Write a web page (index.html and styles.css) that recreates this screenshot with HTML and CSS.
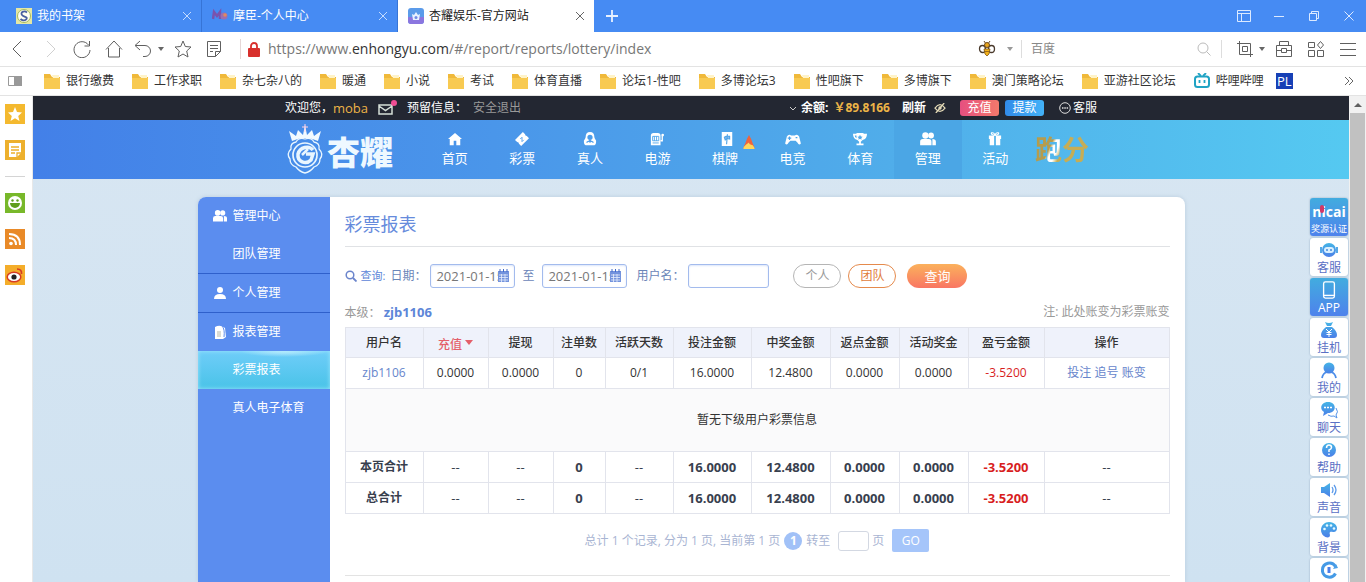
FILE: index.html
```html
<!DOCTYPE html>
<html lang="zh-CN">
<head>
<meta charset="utf-8">
<title>杏耀娱乐-官方网站</title>
<link rel="stylesheet" href="styles.css">
</head>
<body>
<svg class="defs" aria-hidden="true">
  <defs>
    <linearGradient id="blue" x1="0" y1="0" x2="0" y2="1"><stop offset="0" stop-color="#45b5e6"/><stop offset="1" stop-color="#4b7fe8"/></linearGradient>
    <symbol id="folder" viewBox="0 0 16 16"><path d="M0 1h6l2 3h8v12H0z" fill="#f0b93a"/><path d="M8 2h7v3H9z" fill="#fff3c8"/><path d="M0 5h16v11H0z" fill="#f8ca52"/></symbol>
    <symbol id="people" viewBox="0 0 18 16"><g fill="currentColor"><circle cx="6" cy="4" r="3.6"/><circle cx="12.5" cy="4" r="3.3"/><path d="M0 15v-4q0-3 3-3h7q3 0 3 3v4zM14 15h4v-4q0-3-4-3z"/></g></symbol>
    <symbol id="calendar" viewBox="0 0 13 13"><path d="M1 2h11v11H1z" fill="#7393dd"/><path d="M3 0v3M6.500 0v3M10 0v3" stroke="#4169c9"/><path d="M2 6h9M2 8.500h9M2 11h9M4.500 5v8M8 5v8" stroke="#e7edfb" stroke-width=".8"/></symbol>
  </defs>
</svg>

<header class="browser">
  <div class="tabs">
    <div class="tab">
      <svg class="i16" viewBox="0 0 16 16"><path d="M0 0h16v16H0z" fill="#e5e7a4"/><circle cx="8" cy="8" r="6.500" fill="#fffef0" stroke="#a3b860"/><path d="M11 4.500C8 2 4 4.500 6 7s6 1.500 4.500 4-5 1-6 0" fill="none" stroke="#4a60a0" stroke-width="1.800"/></svg>
      <span class="tab-name">我的书架</span><button class="tab-x" aria-label="关闭"><svg class="i10" viewBox="0 0 10 10"><path d="M1 1l8 8M9 1L1 9"/></svg></button>
    </div>
    <div class="tab">
      <svg class="i16" viewBox="0 0 16 16"><path d="M1 11l1-7 3 4 3-4v7" fill="none" stroke="#7a53ad" stroke-width="2.500"/><circle cx="12" cy="8" r="3.500" fill="#9d6fae"/><circle cx="13" cy="7" r="1.800" fill="#e0895f"/></svg>
      <span class="tab-name">摩臣-个人中心</span><button class="tab-x" aria-label="关闭"><svg class="i10" viewBox="0 0 10 10"><path d="M1 1l8 8M9 1L1 9"/></svg></button>
    </div>
    <div class="tab tab-on">
      <svg class="i16" viewBox="0 0 16 16"><rect width="16" height="16" rx="3" fill="#5b9bea"/><path d="M0 9h16v4q0 3-3 3H3q-3 0-3-3z" fill="#8b76df"/><path d="M4 6l2 1 2-3 2 3 2-1-1 6H5z" fill="#e9f1ff"/><circle cx="8" cy="9.500" r="1.500" fill="#6f8be5"/></svg>
      <span class="tab-name">杏耀娱乐-官方网站</span><button class="tab-x" aria-label="关闭"><svg class="i10" viewBox="0 0 10 10"><path d="M1 1l8 8M9 1L1 9"/></svg></button>
    </div>
    <button class="tab-new" aria-label="新标签"><svg class="i12" viewBox="0 0 12 12"><path d="M6 0v12M0 6h12" stroke-width="1.800"/></svg></button>
    <div class="window-buttons">
      <button aria-label="布局"><svg class="i14" viewBox="0 0 14 14"><path d="M.5 1.500h13v11H.5zM.5 4.500h13M4.500 4.500v8"/></svg></button>
      <button aria-label="最小化"><svg class="i14" viewBox="0 0 14 14"><path d="M2 7.500h10"/></svg></button>
      <button aria-label="还原"><svg class="i14" viewBox="0 0 14 14"><path d="M2.500 4.500h7v7h-7zM4.500 4.500v-2h7v7h-2"/></svg></button>
      <button aria-label="关闭窗口"><svg class="i14" viewBox="0 0 14 14"><path d="M2.500 2.500l9 9M11.500 2.500l-9 9"/></svg></button>
    </div>
  </div>

  <div class="toolbar">
    <div class="tools">
      <button aria-label="后退"><svg class="i18" viewBox="0 0 18 18"><path d="M12 1L4 9l8 8"/></svg></button>
      <button class="faint" aria-label="前进"><svg class="i18" viewBox="0 0 18 18"><path d="M6 1l8 8-8 8"/></svg></button>
      <button aria-label="刷新"><svg class="i18" viewBox="0 0 18 18"><path d="M15.500 5A8 8 0 1 0 17 10M16.500 1v5h-5"/></svg></button>
      <button aria-label="主页"><svg class="i18" viewBox="0 0 18 18"><path d="M1 9.500L9 1l8 8.500M3.500 8v9h11V8"/></svg></button>
    </div>
    <button class="undo" aria-label="撤销"><svg class="i18" viewBox="0 0 18 18"><path d="M6 1L1 5.500 6 10M1.500 5.500H11a5.500 5.500 0 0 1 0 11H9"/></svg><span class="caret"></span></button>
    <button aria-label="收藏"><svg class="i18" viewBox="0 0 18 18"><path d="M9 1l2.300 5.500 5.700.5-4.300 4 1.300 6L9 14l-5 3 1.300-6L1 7l5.700-.5z"/></svg></button>
    <button class="reader" aria-label="笔记"><svg class="i16" viewBox="0 0 16 16"><path d="M1.500.5h13v10l-5 5h-8zM14.500 10.500h-5v5M4 4.500h8M4 7.500h8M4 10.500h3"/></svg></button>
    <div class="address">
      <svg class="lock" viewBox="0 0 12 15"><path d="M3 7V4a3 3 0 0 1 6 0v3" fill="none" stroke="#d8302c" stroke-width="1.800"/><rect y="6" width="12" height="9" rx="1" fill="#d8302c"/></svg>
      <span>https://www.<b>enhongyu.com</b>/#/report/reports/lottery/index</span>
    </div>
    <svg class="i18" viewBox="0 0 18 18"><path d="M6 1l2 3M12 1l-2 3" stroke="#6d4b20"/><ellipse cx="4.500" cy="9" rx="3" ry="3.500" fill="#fff" stroke="#4a3a2c" stroke-width="1.300"/><ellipse cx="13.500" cy="9" rx="3" ry="3.500" fill="#fff" stroke="#4a3a2c" stroke-width="1.300"/><circle cx="9" cy="5" r="2.500" fill="#e8a51c" stroke="#6d4b20"/><path d="M6 9h6l-1 5-2 2-2-2z" fill="#f3b21b" stroke="#7d5518" stroke-width=".8"/><path d="M7 11.500h4" stroke="#a06d18"/></svg>
    <span class="caret caret-bee"></span>
    <div class="search"><input type="text" placeholder="百度" aria-label="百度"><svg class="i14" viewBox="0 0 14 14"><circle cx="6" cy="6" r="5"/><path d="M9.500 9.500L13.500 13.500"/></svg></div>
    <div class="tools-right">
      <button class="undo" aria-label="截图"><svg class="i16" viewBox="0 0 16 16"><path d="M0 2.500h13.500V16M2.500 0v13.500H16M5.500 5.500h5v5h-5z"/></svg><span class="caret"></span></button>
      <button aria-label="工具箱"><svg class="i16" viewBox="0 0 16 16"><path d="M.5 4.500h15v11H.5zM3.500 4.500v-4h9v4M.5 9.500h5M10.500 9.500h5M5.500 7.500h5v4h-5z"/></svg></button>
      <button aria-label="应用"><svg class="i16" viewBox="0 0 16 16"><path d="M.5 1.500h6v5h-6zM.5 9.500h6v6h-6zM9.500 9.500h6v6h-6zM12.500.5l3 3.500-3 3.500-3-3.500z"/></svg></button>
      <button aria-label="菜单"><svg class="i16" viewBox="0 0 16 16"><path d="M0 2.500h16M0 8.500h16M0 14.500h16"/></svg></button>
    </div>
  </div>

  <nav class="bookmarks">
    <svg class="panel-icon" viewBox="0 0 14 10"><path d="M.5.500h13v9H.5z" fill="#fff" stroke="#999"/><path d="M6 0h8v10H6z" fill="#999"/></svg>
    <a href="#"><svg class="i16"><use href="#folder"/></svg>银行缴费</a>
    <a href="#"><svg class="i16"><use href="#folder"/></svg>工作求职</a>
    <a href="#"><svg class="i16"><use href="#folder"/></svg>杂七杂八的</a>
    <a href="#"><svg class="i16"><use href="#folder"/></svg>暖通</a>
    <a href="#"><svg class="i16"><use href="#folder"/></svg>小说</a>
    <a href="#"><svg class="i16"><use href="#folder"/></svg>考试</a>
    <a href="#"><svg class="i16"><use href="#folder"/></svg>体育直播</a>
    <a href="#"><svg class="i16"><use href="#folder"/></svg>论坛1-性吧</a>
    <a href="#"><svg class="i16"><use href="#folder"/></svg>多博论坛3</a>
    <a href="#"><svg class="i16"><use href="#folder"/></svg>性吧旗下</a>
    <a href="#"><svg class="i16"><use href="#folder"/></svg>多博旗下</a>
    <a href="#"><svg class="i16"><use href="#folder"/></svg>澳门策略论坛</a>
    <a href="#"><svg class="i16"><use href="#folder"/></svg>亚游社区论坛</a>
    <a href="#"><svg class="i16" viewBox="0 0 16 16"><path d="M4 0l3 3M12 0L9 3" stroke="#20a3c4" stroke-width="1.800"/><rect x="1" y="3.500" width="14" height="10.500" rx="2.500" fill="#fff" stroke="#20a3c4" stroke-width="2"/><path d="M5.500 7v3M10.500 7v3" stroke="#20a3c4" stroke-width="1.800"/></svg>哔哩哔哩</a>
    <a class="pl" href="#">PL</a>
    <button class="more" aria-label="更多"><svg class="i10" viewBox="0 0 10 10"><path d="M1 1l4 4-4 4M5 1l4 4-4 4"/></svg></button>
  </nav>
</header>

<div class="pane">
  <aside class="strip">
    <svg class="i20" viewBox="0 0 20 20"><path d="M0 0h20v20H0z" fill="#f4b92f"/><path d="M10 3l2 5 5 .5-3.800 3.500 1.300 5-4.500-2.800L5.500 17l1.300-5L3 8.500 8 8z" fill="#fff"/></svg>
    <svg class="i20" viewBox="0 0 20 20"><path d="M0 0h20v20H0z" fill="#edb02d"/><path d="M4 3h12v10l-4 4H4z" fill="#fff"/><path d="M6 7h8M6 10h8M6 13h4M12 17v-4h4" fill="none" stroke="#edb02d" stroke-width="1.300"/></svg>
    <hr>
    <svg class="i20" viewBox="0 0 20 20"><path d="M0 0h20v20H0z" fill="#78b82a"/><circle cx="10" cy="10" r="7" fill="#fff"/><circle cx="7.500" cy="7.500" r="1.200" fill="#5f9e1c"/><circle cx="12.500" cy="7.500" r="1.200" fill="#5f9e1c"/><path d="M5 10h10a5 5 0 0 1-10 0" fill="#5f9e1c"/></svg>
    <svg class="i20" viewBox="0 0 20 20"><path d="M0 0h20v20H0z" fill="#e98a28"/><circle cx="6" cy="14.500" r="1.800" fill="#fff"/><path d="M4 9q7 0 7 7M4 5q11 0 11 11" fill="none" stroke="#fff" stroke-width="2"/></svg>
    <svg class="i20" viewBox="0 0 20 20"><path d="M0 0h20v20H0z" fill="#f4ad2a"/><ellipse cx="9" cy="12" rx="6.800" ry="4.800" fill="#fff" stroke="#d63b24" stroke-width="1.500"/><circle cx="9" cy="12" r="2.600" fill="#222"/><path d="M12 4q5 0 4.500 5" fill="none" stroke="#d63b24" stroke-width="1.700"/></svg>
  </aside>

  <main class="site">
    <div class="topbar">
      <div class="wrap">
        <span>欢迎您，</span><span class="gold">moba</span>
        <a class="mail" href="#" aria-label="消息"><svg class="mail-icon" viewBox="0 0 20 16"><path d="M1 5h13v9H1zM1 6l6.500 4.500L14 6" fill="none" stroke="#d5dfd8" stroke-width="1.500"/><circle cx="16" cy="3" r="3" fill="#f04d94"/></svg></a>
        <span>预留信息：</span><a class="quit" href="#">安全退出</a>
        <div class="account">
          <svg class="chev" viewBox="0 0 8 8"><path d="M1 3l3 3 3-3"/></svg>
          <b>余额:</b><b class="gold money">￥89.8166</b><b>刷新</b>
          <svg class="eye" viewBox="0 0 14 12"><path d="M1 6q6-8 12 0-6 8-12 0z" fill="none" stroke="#e5dbb8" stroke-width="1.500"/><circle cx="7" cy="6" r="2" fill="#e5dbb8"/><path d="M2 12L12 0" stroke="#e5dbb8" stroke-width="1.500"/></svg>
          <button class="pill pill-pink">充值</button><button class="pill pill-blue">提款</button>
          <a class="service" href="#"><svg class="i12" viewBox="0 0 12 12"><circle cx="6" cy="6" r="5.300"/><path d="M3 6h1.500M5.300 6h1.500M7.600 6h1.500" stroke-width="1.500"/></svg>客服</a>
        </div>
      </div>
    </div>

    <div class="navbar">
      <div class="wrap">
        <a class="logo" href="#">
          <svg class="emblem" viewBox="0 0 40 52"><g fill="none" stroke="#e9f6ff"><path d="M20 15q6-2 9 3 6 1 5 7 5 5 1 10 0 6-6 8-4 5-9 6-5-1-9-6-6-2-6-8-4-5 1-10-1-6 5-7 3-5 9-3z" stroke-width="1.300"/><circle cx="20" cy="31" r="12" stroke-width="1.700"/><path d="M28 26C24 21 15 23 13 30c-1 8 8 11 13 6l2-6h-7" stroke-width="3.500"/><path d="M17 31l6-6" stroke-width="2.500"/></g><path d="M7 17L4 7l7 5 2-6 5 5 2-10 2 10 5-5 2 6 7-5-3 10q-13-6-26 0z" fill="#f1faff"/><path d="M20 0v8M17 3h6" stroke="#ffd0e3"/></svg>
          <span>杏耀</span>
        </a>
        <nav class="menu">
          <a href="#"><svg class="ic" viewBox="0 0 16 16"><path d="M8 1l8 7h-2v7H9.500v-5h-3v5H2V8H0z" fill="#fff"/></svg>首页</a>
          <a href="#"><svg class="ic" viewBox="0 0 16 16"><path d="M9 0l2.500 2.500q0 2 2 2L16 7l-9 9-2.500-2.500q0-2-2-2L0 9z" fill="#fff"/><path d="M6 8l2-2v5l2-2" fill="none" stroke="#4c9deb"/></svg>彩票</a>
          <a href="#"><svg class="ic" viewBox="0 0 16 16"><path d="M8 0q5 0 5 6 0 1 2 4 0 5-2 5H3q-2 0-2-5 2-3 2-4 0-6 5-6z" fill="#fff"/><path d="M8 3q3 0 3 3t-3 3-3-3 3-3zM7 9h2v3H7z" fill="#4c9deb"/><path d="M4 12q4-3 8 0" fill="none" stroke="#4c9deb" stroke-width="1.300"/></svg>真人</a>
          <a href="#"><svg class="ic" viewBox="0 0 16 16"><path d="M1 15V4q0-3 3-3h5q3 0 3 3v11z" fill="#fff"/><path d="M3 5h7v5H3zM5 5v5M7.500 5v5M3 12.500h7" fill="none" stroke="#4ca4eb"/><path d="M12 10h2V4" fill="none" stroke="#fff" stroke-width="1.500"/><circle cx="14.500" cy="3.500" r="1.500" fill="#fff"/></svg>电游</a>
          <a href="#" class="hot"><svg class="ic" viewBox="0 0 16 16"><path d="M2 0h12v16H2z" fill="#fff"/><path d="M5 6q3-2 6-1v3q-3-1-5 1zM8.500 2.500L7.500 14" fill="#8ab9ec" stroke="#51a6e8" stroke-width="1.300"/></svg>棋牌<svg class="flame" viewBox="0 0 12 16"><path d="M6 0q3 5 4 9 2 4 2 6H0q0-3 2-6 1-4 4-9z" fill="#f0643c"/><path d="M6 8q0 2 4 3 2 2 2 4H0q0-3 3-5z" fill="#ffd75c"/></svg></a>
          <a href="#"><svg class="ic" viewBox="0 0 18 16"><path d="M2 5q2-3 5-1h4q3-2 5 1l2 8q-2 3-4-1l-2-2H6l-2 2q-2 4-4 1z" fill="#fff"/><path d="M3 7h4M5 5v4M12 6.500h2" stroke="#4ca4eb" stroke-width="1.300"/></svg>电竞</a>
          <a href="#"><svg class="ic" viewBox="0 0 16 16"><path d="M4 1h8v1h4q0 6-5 7l-2 2v2h3v2H4v-2h3v-2L5 9Q0 8 0 2h4zM2 4q0 2 2 3V4zM14 4q0 2-2 3V4z" fill="#fff"/><path d="M8 3l1 2 2 .3-1.500 1.500.3 2L8 7.700 6.200 8.800l.3-2L5 5.300 7 5z" fill="#51a9ea"/></svg>体育</a>
          <a href="#" class="on"><svg class="ic"><use href="#people"/></svg>管理</a>
          <a href="#"><svg class="ic" viewBox="0 0 16 16"><path d="M1 4h6v4H1zM9 4h6v4H9zM2 8h5v7H2zM9 8h5v7H9z" fill="#fff"/><path d="M8 4Q3 3 4 1q3-1 4 3 1-4 4-3 1 2-4 3" fill="none" stroke="#fff" stroke-width="1.300"/></svg>活动</a>
        </nav>
        <a class="run" href="#">跑分</a>
      </div>
    </div>

    <div class="card">
      <nav class="side">
        <div class="group"><a href="#"><svg class="i14"><use href="#people"/></svg>管理中心</a><a href="#" class="sub">团队管理</a></div>
        <div class="group"><a href="#"><svg class="i14" viewBox="0 0 14 14"><circle cx="7" cy="4" r="3" fill="#fff"/><path d="M1 13q0-5 6-5t6 5z" fill="#fff"/></svg>个人管理</a></div>
        <div class="group"><a href="#"><svg class="i14" viewBox="0 0 14 14"><path d="M2 2q5-3 10 1l1 9-3 2H2z" fill="#fff"/><path d="M9 1q3 3 2 11" fill="none" stroke="#5b8def"/><path d="M4 7h4M4 9h4M4 11h4" stroke="#b8b8a8"/></svg>报表管理</a><a href="#" class="sub active">彩票报表</a><a href="#" class="sub">真人电子体育</a></div>
      </nav>

      <section class="content">
        <h1>彩票报表</h1>
        <form class="filter" onsubmit="return false">
          <svg class="i12" viewBox="0 0 12 12"><circle cx="5" cy="5" r="3.800" stroke-width="1.500"/><path d="M8 8l3.500 3.500" stroke-width="1.800"/></svg>
          <span class="query-label">查询:</span>
          <label for="from">日期：</label>
          <span class="date"><input id="from" type="text" value="2021-01-15"><svg><use href="#calendar"/></svg></span>
          <label class="to" for="to">至</label>
          <span class="date"><input id="to" type="text" value="2021-01-15"><svg><use href="#calendar"/></svg></span>
          <label class="user-label" for="user">用户名：</label>
          <input id="user" class="user" type="text">
          <button class="round">个人</button><button class="round orange">团队</button><button class="submit">查询</button>
        </form>
        <div class="level"><span>本级： <a href="#">zjb1106</a></span><span>注: 此处账变为彩票账变</span></div>
        <table>
          <colgroup><col class="c78"><col class="c65"><col class="c65"><col class="c52"><col class="c68"><col class="c78"><col class="c79"><col class="c69"><col class="c69"><col class="c76"><col class="c125"></colgroup>
          <thead><tr><th>用户名</th><th class="sort">充值<span class="sort-caret"></span></th><th>提现</th><th>注单数</th><th>活跃天数</th><th>投注金额</th><th>中奖金额</th><th>返点金额</th><th>活动奖金</th><th>盈亏金额</th><th>操作</th></tr></thead>
          <tbody>
            <tr><td><a href="#">zjb1106</a></td><td>0.0000</td><td>0.0000</td><td>0</td><td>0/1</td><td>16.0000</td><td>12.4800</td><td>0.0000</td><td>0.0000</td><td class="neg">-3.5200</td><td><a href="#">投注</a> <a href="#">追号</a> <a href="#">账变</a></td></tr>
            <tr class="empty"><td colspan="11">暂无下级用户彩票信息</td></tr>
          </tbody>
          <tfoot>
            <tr><td>本页合计</td><td class="none">--</td><td class="none">--</td><td>0</td><td class="none">--</td><td>16.0000</td><td>12.4800</td><td>0.0000</td><td>0.0000</td><td class="neg">-3.5200</td><td class="none">--</td></tr>
            <tr><td>总合计</td><td class="none">--</td><td class="none">--</td><td>0</td><td class="none">--</td><td>16.0000</td><td>12.4800</td><td>0.0000</td><td>0.0000</td><td class="neg">-3.5200</td><td class="none">--</td></tr>
          </tfoot>
        </table>
        <div class="pager"><span>总计 1 个记录, 分为 1 页, 当前第 1 页</span><a class="num" href="#">1</a><label for="jump">转至</label><input id="jump" type="text"><span class="unit">页</span><button>GO</button></div>
      </section>
    </div>

    <nav class="dock">
      <a class="solid nicai" href="#"><strong>nicai</strong><em></em>奖源认证</a>
      <a href="#"><svg class="i18" viewBox="0 0 18 18"><circle cx="9" cy="9" r="7" fill="url(#blue)"/><path d="M1 6v6M17 6v6" stroke="#55a8e6" stroke-width="2"/><rect x="4" y="6" width="10" height="6" rx="3" fill="#d8efff"/><circle cx="7" cy="9" r="1" fill="#4388dd"/><circle cx="11" cy="9" r="1" fill="#4388dd"/></svg>客服</a>
      <a class="solid" href="#"><svg class="phone" viewBox="0 0 14 20"><rect x="1" y="1" width="12" height="18" rx="2" fill="none" stroke="#fff" stroke-width="1.500"/><path d="M1 16h12" stroke="#fff" stroke-width="1.500"/></svg>APP</a>
      <a href="#"><svg class="i18" viewBox="0 0 18 18"><path d="M5 1q4 2 8 0l-2 4H7zM6 6h6q5 4 5 8 0 3-3 3H4q-3 0-3-3 0-4 5-8z" fill="url(#blue)"/><path d="M6 8l3 3 3-3M9 11v5M6.500 11.500h5M6.500 13.500h5" stroke="#fff" fill="none"/></svg>挂机</a>
      <a href="#"><svg class="i18" viewBox="0 0 18 18"><circle cx="9" cy="7" r="5.500" fill="url(#blue)"/><path d="M2 17q1-5 5-6M16 17q-1-5-5-6" fill="none" stroke="#4b8ce8" stroke-width="1.800"/></svg>我的</a>
      <a href="#"><svg class="i18" viewBox="0 0 18 18"><path d="M8 1c9 0 9 11 0 11l-5 3 1-4C-1 8 1 1 8 1z" fill="url(#blue)"/><path d="M16 7q3 4 0 7l1 3-3-2q-3 1-6-1" fill="none" stroke="#5594e8"/><path d="M4 6.500h2M7 6.500h2M10 6.500h2" stroke="#fff" stroke-width="1.500"/></svg>聊天</a>
      <a href="#"><svg class="i18" viewBox="0 0 18 18"><circle cx="9" cy="9" r="7" fill="url(#blue)"/><path d="M6.500 7q0-3 2.500-3t2.500 2.500Q11.500 8 9 9v2M9 12.500V14" fill="none" stroke="#fff" stroke-width="1.500"/></svg>帮助</a>
      <a href="#"><svg class="i18" viewBox="0 0 18 18"><path d="M1 6h3l6-4v14l-6-4H1z" fill="url(#blue)"/><path d="M12 6q2 3 0 6M14 4q4 5 0 10" fill="none" stroke="#5b9aea" stroke-width="1.300"/></svg>声音</a>
      <a href="#"><svg class="i18" viewBox="0 0 18 18"><path d="M9 1C20 2 18 12 13 11c-3-1-4 0-3 3 0 5-9 2-9-5 0-5 4-8 8-8z" fill="url(#blue)"/><g fill="#e6fbff"><circle cx="4.500" cy="8" r="1.300"/><circle cx="7" cy="4.500" r="1.300"/><circle cx="11" cy="4.500" r="1.300"/><circle cx="14" cy="7.500" r="1.300"/></g></svg>背景</a>
      <a href="#" aria-label="转换"><svg class="i18" viewBox="0 0 18 18"><path d="M15.500 5.500a7 7 0 0 0-13 3v2a7 7 0 0 0 13 2" fill="none" stroke="#459ae6" stroke-width="3"/><path d="M9 6v6" stroke="#4b7fe8" stroke-width="3"/><path d="M13 8l5-1-2-4z" fill="#4b9fe8"/></svg></a>
    </nav>
  </main>
  <div class="scroll" aria-hidden="true"><svg class="i10" viewBox="0 0 10 10"><path d="M1 7l4-4 4 4z" fill="#606060"/></svg><span></span></div>
</div>
</body>
</html>
```
FILE: styles.css
```css
* { box-sizing: border-box; }
body { margin: 0; height: 100vh; display: flex; flex-direction: column; overflow: hidden; font: 12px/18px "Open Sans", "Noto Sans CJK SC", sans-serif; color: #333; background: #fff; }
a { color: inherit; text-decoration: none; }
button, input { font: inherit; color: inherit; padding: 0; margin: 0; border: 0; background: none; outline: 0; }
svg { display: block; flex: none; fill: none; stroke: none; }
.defs { position: absolute; width: 0; height: 0; }
.i10 { width: 10px; height: 10px; }
.i12 { width: 12px; height: 12px; }
.i14 { width: 14px; height: 14px; }
.i16 { width: 16px; height: 16px; }
.i18 { width: 18px; height: 18px; }
.i20 { width: 20px; height: 20px; }

/* browser frame */
.tabs { display: flex; height: 32px; background: #468bf3; color: #fff; }
.tab { display: flex; align-items: center; gap: 5px; width: 196px; padding: 0 9px 0 10px; border-right: 1px solid #3674d6; }
.tab:first-child { width: 202px; padding-left: 16px; }
.tab-on { background: #fff; color: #222; border: 0; }
.tab-name { flex: 1; }
.tab-x { stroke: #c4dcff; }
.tab-on .tab-x { stroke: #666; }
.tab-new { width: 36px; display: grid; place-items: center; stroke: #e8f1ff; }
.window-buttons { display: flex; gap: 21px; align-items: center; margin-left: auto; padding-right: 10px; stroke: #dceaff; }
.window-buttons svg, .tab-x svg, .tab-new svg, .toolbar button svg, .more svg { stroke: inherit; }
.toolbar { display: flex; align-items: center; height: 35px; padding: 0 10px 0 9px; border-bottom: 1px solid #e3e3e3; stroke: #5f5f5f; }
.tools { display: flex; gap: 14px; margin-right: 11px; }
.faint { stroke: #d0d0d0; }
.undo { display: flex; align-items: center; gap: 6px; margin-right: 10px; }
.caret { border: 3px solid transparent; border-top: 4px solid #666; border-bottom: 0; }
.reader { margin: 0 18px 0 14px; }
.address { flex: 1; display: flex; align-items: center; gap: 8px; padding-left: 7px; border-left: 1px solid #e5d7d7; font-size: 14px; line-height: 20px; color: #777; }
.address b { font-weight: 400; color: #333; }
.lock { width: 12px; height: 15px; }
.caret-bee { margin: 0 8px 0 11px; border-top-color: #999; }
.search { display: flex; align-items: center; width: 201px; padding: 0 10px 0 9px; border: 1px solid #ddd; border-width: 0 1px; margin-right: 15px; stroke: #bbb; }
.search svg { stroke: #bbb; }
.search input { flex: 1; width: 100px; }
.search input::placeholder { color: #888; opacity: 1; }
.tools-right { display: flex; gap: 16px; }
.tools-right .undo { margin-right: -5px; }
.bookmarks { display: flex; align-items: center; gap: 18px; height: 29px; padding: 0 12px 0 8px; border-bottom: 1px solid #e3e3e3; white-space: nowrap; }
.bookmarks a { display: flex; align-items: center; gap: 6px; }
.panel-icon { width: 14px; height: 10px; margin-right: 4px; }
.bookmarks .pl { width: 17px; height: 16px; margin-left: -6px; justify-content: center; background: #1740b6; color: #fff; font-size: 13px; line-height: 16px; }
.more { margin-left: auto; stroke: #666; }

.pane { flex: 1; min-height: 0; display: flex; }
.strip { width: 33px; display: flex; flex-direction: column; align-items: center; gap: 16px; padding: 8px 3px 0 0; border-right: 1px solid #e8e8e8; }
.strip hr { width: 20px; margin: 0; border: 0; border-top: 1px solid #d4d4d4; }
.site { flex: 1; min-width: 0; position: relative; display: flex; flex-direction: column; overflow: hidden; background: linear-gradient(#d8e6f2, #cfe2f1); }
.scroll { width: 17px; background: #f1f1f1; display: flex; flex-direction: column; align-items: center; padding-top: 4px; gap: 3px; }
.scroll span { width: 15px; flex: 1; background: #c1c1c1; }

/* account bar */
.wrap { width: 812px; max-width: 100%; margin: 0 auto; display: flex; align-items: center; }
.topbar { flex: none; background: #232732; color: #fff; }
.topbar .wrap { height: 24px; }
.gold { color: #edb447; font-size: 13px; }
.mail { margin: 0 9px 0 10px; }
.mail-icon { width: 20px; height: 16px; }
.quit { margin-left: 6px; color: #999; }
.account { margin-left: auto; display: flex; align-items: center; }
.chev { width: 8px; height: 8px; margin-right: 4px; stroke: #ccc; }
.gold.money { font-size: 12px; margin: 0 12px 0 5px; }
.eye { width: 12px; height: 10px; margin: 0 14px 0 8px; }
.pill { width: 39px; height: 16px; line-height: 16px; margin-right: 6px; border-radius: 3px; color: #fff; }
.pill-pink { background: linear-gradient(90deg, #e64f80, #f4796b); }
.pill-blue { background: linear-gradient(90deg, #318be9, #43b2f8); }
.service { display: flex; align-items: center; gap: 2px; margin-left: 9px; }
.service svg { stroke: #ddd; }

/* main navigation */
.navbar { flex: none; background: linear-gradient(90deg, #4380e8, #4a96ea 35%, #50adea 65%, #55c9f1); color: #fff; }
.navbar .wrap { height: 59px; align-items: stretch; }
.logo { display: flex; align-items: center; width: 136px; gap: 2px; font-size: 33px; font-weight: 900; line-height: 40px; color: #eef8ff; }
.logo span { padding-top: 6px; }
.emblem { width: 40px; height: 52px; }
.menu { display: flex; width: 608px; }
.menu a { position: relative; flex: 1; display: flex; flex-direction: column; align-items: center; gap: 2px; padding-top: 12px; font-size: 13px; line-height: 20px; }
.ic { width: 16px; height: 14px; }
.menu .on { background: #4ba6e5; }
.hot .ic { margin-left: 4px; }
.flame { position: absolute; right: 4px; top: 15px; width: 12px; height: 15px; }
.run { font: 700 27px/58px "Noto Sans CJK SC", sans-serif; padding-left: 6px; color: transparent; background: linear-gradient(115deg, #b59c4d 38%, #fff 42%, #fff 48%, #c6ad55 54%); background-clip: text; -webkit-background-clip: text; white-space: nowrap; }

/* report card */
.card { flex: 1; width: 75%; min-width: 880px; margin: 18px auto 0; display: flex; background: #fff; border-radius: 8px 8px 0 0; overflow: hidden; box-shadow: 0 0 4px #b8cbdc; }
.side { flex: none; width: 132px; background: #5b8def; color: #fff; }
.group + .group { box-shadow: inset 0 1px #2f60cb; }
.group + .group > a:first-child { height: 39px; }
.side a { display: flex; align-items: center; gap: 6px; height: 38px; padding-left: 15px; }
.side .sub { padding-left: 35px; }
.side .active { background: radial-gradient(ellipse 44px 6px at 65% 0, #c4effd, #75d3fa00), linear-gradient(#6fcdf9, #49c3e8); box-shadow: inset 0 0 4px #9de5fc; }
.content { flex: 1; min-width: 0; padding: 15px; }
h1 { margin: 0 0 17px; padding-bottom: 10px; border-bottom: 1px solid #e0e2e5; color: #668bdc; font-size: 18px; font-weight: 400; line-height: 24px; }
.filter { display: flex; align-items: center; height: 24px; color: #6b85b8; white-space: nowrap; }
.filter > svg { stroke: #6b85cc; }
.query-label { margin: 0 5px 0 4px; font-size: 11px; color: #5d86d8; }
.filter input { height: 24px; border: 1px solid #a3bbed; border-radius: 3px; background: #fff; box-shadow: inset 0 1px 2px #dce6fa; }
.date { position: relative; margin-left: 4px; }
.date input { display: block; width: 85px; padding-left: 5px; font-size: 13px; color: #777; }
.date svg { position: absolute; right: 5px; top: 5px; width: 13px; height: 13px; }
.to { margin: 0 4px 0 7px; }
.user-label { margin: 0 4px 0 9px; }
.user { width: 81px; margin-right: 24px; }
.round { width: 48px; height: 24px; margin-right: 7px; border: 1px solid #b5b5b5; border-radius: 12px; color: #999; background: #fff; }
.orange { border-color: #e58a4c; color: #e17b39; margin-right: 11px; }
.submit { width: 60px; height: 24px; border-radius: 12px; color: #fff; font-size: 13px; background: linear-gradient(#fbb15c, #f97663); }
.level { display: flex; justify-content: space-between; margin: 15px 0 5px; color: #999; }
.level a { font-size: 13px; font-weight: 700; color: #5d86d8; }
table { width: 100%; table-layout: fixed; border-collapse: collapse; text-align: center; }
th, td { height: 31px; padding: 0; border: 1px solid #e2e4ec; white-space: nowrap; }
th { height: 30px; background: #eff2fb; font-weight: 500; }
td a { color: #6685cc; }
.c52 { width: 52px; } .c65 { width: 65px; } .c68 { width: 68px; } .c69 { width: 69px; } .c76 { width: 76px; } .c78 { width: 78px; } .c79 { width: 79px; } .c125 { width: 125px; }
.sort { color: #e45f6a; padding-top: 4px; }
.sort-caret { display: inline-block; margin-left: 3px; vertical-align: 4px; border: 4px solid transparent; border-top: 5px solid #e45f6a; border-bottom: 0; }
.neg, tfoot .neg { color: #d81e1e; }
.empty td { height: 63px; background: #fafafb; }
tfoot td { font-size: 13px; font-weight: 700; color: #38404e; }
tfoot td:first-child { font-size: 12px; }
tfoot .none { font-weight: 400; }
.pager { display: flex; align-items: center; justify-content: center; margin-top: 15px; padding-bottom: 23px; border-bottom: 1px solid #e3e3e3; color: #a9b5d3; }
.num { width: 18px; height: 18px; margin: 0 4px; border-radius: 50%; background: #a1c1f7; color: #fff; font-weight: 700; text-align: center; }
.pager input { width: 31px; height: 20px; margin: 0 3px 0 8px; border: 1px solid #d3d8e2; border-radius: 3px; }
.pager button { width: 37px; height: 23px; margin-left: 8px; border-radius: 2px; background: #a5c5fa; color: #fff; }

/* floating shortcuts */
.dock { position: absolute; top: 102px; right: 1px; width: 38px; display: grid; gap: 2px; }
.dock a { display: flex; flex-direction: column; align-items: center; gap: 1px; height: 38px; padding-top: 3px; border-radius: 3px; background: #fff; box-shadow: 0 0 2px #8fa5bd; color: #5a70c4; line-height: 16px; }
.dock .solid { background: linear-gradient(#42acdf, #4e82ec); color: #fff; }
.dock .solid .phone { height: 18px; }
.phone { width: 14px; }
.dock .nicai { position: relative; gap: 0; padding-top: 4px; white-space: nowrap; font-size: 9px; line-height: 14px; }
.nicai strong { font: 700 14px/20px "Open Sans", sans-serif; }
.nicai em { position: absolute; left: 10px; top: 7px; width: 4px; height: 8px; border-radius: 2px; background: #d23767; }
```
